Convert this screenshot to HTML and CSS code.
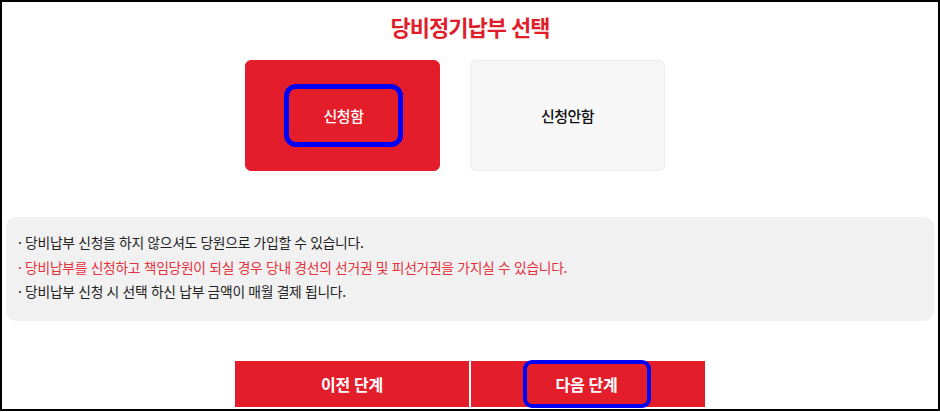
FILE: index.html
```html
<!DOCTYPE html>
<html lang="ko">
<head>
<meta charset="utf-8">
<title>당비정기납부 선택</title>
<link rel="stylesheet" href="styles.css">
</head>
<body>
<div class="frame">
  <h2 class="title">당비정기납부 선택</h2>
  <div class="options">
    <button class="opt opt-on" type="button"><span class="focus focus-lg">신청함</span></button>
    <button class="opt" type="button">신청안함</button>
  </div>
  <ul class="notes">
    <li>· 당비납부 신청을 하지 않으셔도 당원으로 가입할 수 있습니다.</li>
    <li class="hl">· 당비납부를 신청하고 책임당원이 되실 경우 당내 경선의 선거권 및 피선거권을 가지실 수 있습니다.</li>
    <li>· 당비납부 신청 시 선택 하신 납부 금액이 매월 결제 됩니다.</li>
  </ul>
  <div class="steps">
    <button class="step" type="button">이전 단계</button>
    <button class="step" type="button"><span class="focus focus-sm">다음 단계</span></button>
  </div>
</div>
</body>
</html>
```
FILE: styles.css
```css
* { box-sizing: border-box; }
html, body { margin: 0; padding: 0; background: #fff; }
body { font-family: "Noto Sans CJK KR", "Noto Sans", sans-serif; }

.frame {
  width: 940px;
  height: 411px;
  border: 2px solid #000;
  background: #fff;
  overflow: hidden;
}

.title {
  margin: 0;
  padding-top: 9px;
  height: 38px;
  text-align: center;
  font-size: 22px;
  line-height: 30px;
  font-weight: 700;
  letter-spacing: -1px;
  color: #e01e2b;
}

.options {
  display: flex;
  gap: 30px;
  margin-top: 20px;
  padding-left: 243px;
}

.opt {
  width: 195px;
  height: 111px;
  border-radius: 6px;
  border: 1px solid #ececec;
  background: #f7f7f7;
  color: #111;
  font-family: inherit;
  font-size: 15px;
  font-weight: 500;
  letter-spacing: -0.5px;
  display: flex;
  align-items: center;
  justify-content: center;
  padding: 0;
}

.opt-on {
  background: #e41d2b;
  border-color: #e41d2b;
  color: #fff;
}

.focus {
  display: flex;
  align-items: center;
  justify-content: center;
  border: 5px solid #0000f5;
}

.focus-lg {
  width: 119px;
  height: 63px;
  border-radius: 12px;
  margin-left: 2px;
}

.focus-sm {
  width: 128px;
  height: 48px;
  border-radius: 9px;
  border-width: 4px;
  margin-left: -3px;
}

.notes {
  list-style: none;
  margin: 46px 4px 0;
  padding: 13px 12px 18px;
  height: 104px;
  background: #f1f1f1;
  border-radius: 10px;
  font-size: 13.8px;
  line-height: 24.5px;
  letter-spacing: -0.3px;
  color: #222;
}

.notes li { margin: 0; padding: 0; }
.notes .hl { color: #e3313c; }

.steps {
  display: flex;
  justify-content: center;
  gap: 2px;
  margin-top: 40px;
}

.step {
  width: 234px;
  height: 46px;
  border: 0;
  padding: 0;
  background: #e41d2b;
  color: #fff;
  font-family: inherit;
  font-size: 16px;
  font-weight: 700;
  letter-spacing: -0.3px;
  display: flex;
  align-items: center;
  justify-content: center;
}
```
